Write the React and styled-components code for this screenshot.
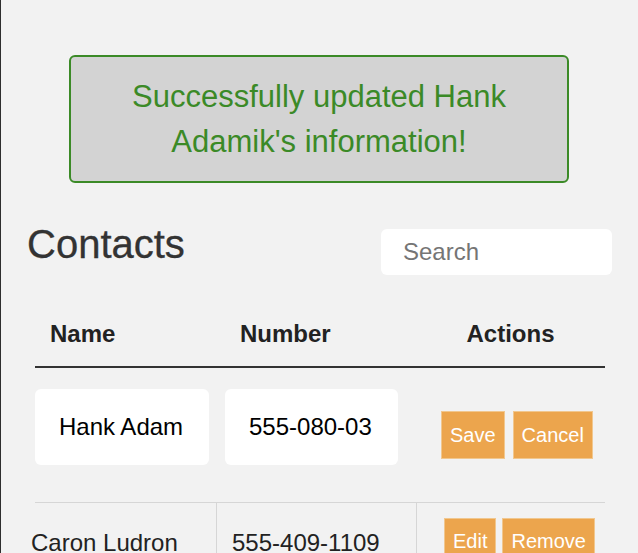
import React from "react";
import styled, { createGlobalStyle } from "styled-components";

const GlobalStyle = createGlobalStyle`
  html, body { margin: 0; padding: 0; background: #f2f2f2; }
  body { font-family: "Liberation Sans", Arial, Helvetica, sans-serif; }
  * { box-sizing: border-box; }
`;

const Page = styled.div`
  min-height: 100vh;
  border-left: 1px solid #2e2e2e;
  padding: 55px 26px 0 25px;
`;

const Alert = styled.div`
  width: 500px;
  margin: 0 auto;
  border: 2px solid #3b8a27;
  border-radius: 6px;
  background: #d3d3d3;
  color: #3b8a27;
  font-size: 31px;
  line-height: 45px;
  text-align: center;
  padding: 17px 24px;
`;

const TopBar = styled.div`
  display: flex;
  justify-content: space-between;
  align-items: flex-start;
  margin-top: 38px;
`;

const Title = styled.h1`
  margin: 0 0 0 1px;
  font-size: 40px;
  line-height: 46px;
  font-weight: normal;
  color: #333;
  -webkit-text-stroke: 0.3px #333;
`;

const Search = styled.input`
  margin-top: 8px;
  width: 231px;
  height: 46px;
  border: none;
  border-radius: 6px;
  background: #fff;
  padding: 0 22px;
  font-family: inherit;
  font-size: 24px;
  color: #222;
  outline: none;
  &::placeholder { color: #757575; }
`;

const Table = styled.div`
  width: 570px;
  margin: 44px 0 0 9px;
`;

const cols = "181px 200px 189px";

const HeadRow = styled.div`
  display: grid;
  grid-template-columns: ${cols};
  padding-top: 1px;
  padding-bottom: 18px;
  border-bottom: 2px solid #333;
`;

const HeadCell = styled.div`
  font-size: 24px;
  line-height: 28px;
  font-weight: bold;
  color: #222;
  padding-left: ${(p) => p.$pad || 0}px;
  text-align: ${(p) => p.$align || "left"};
`;

const Row = styled.div`
  display: grid;
  grid-template-columns: ${cols};
  align-items: stretch;
  min-height: ${(p) => p.$h}px;
  border-top: ${(p) => (p.$line ? "1px solid #d6d6d6" : "none")};
`;

const Cell = styled.div`
  display: flex;
  align-items: center;
  padding-left: ${(p) => p.$pad || 0}px;
  padding-top: ${(p) => p.$top || 0}px;
  border-left: ${(p) => (p.$divider ? "1px solid #d6d6d6" : "none")};
  font-size: 24px;
  color: #222;
`;

const CellText = styled.span`
  margin-left: ${(p) => p.$shift || 0}px;
`;

const Field = styled.input`
  width: ${(p) => p.$w}px;
  height: 76px;
  margin-bottom: 16px;
  border: none;
  border-radius: 6px;
  background: #fff;
  padding: 0 24px;
  font-family: inherit;
  font-size: 24px;
  color: #000;
  outline: none;
`;

const Buttons = styled.div`
  display: flex;
  gap: ${(p) => p.$gap}px;
`;

const Button = styled.button`
  height: 48px;
  padding: 0 8px;
  border: 1px solid #f1c78e;
  background: #eca54d;
  color: #fff;
  font-family: inherit;
  font-size: 20px;
  cursor: pointer;
`;

export default function App() {
  return (
    <>
      <GlobalStyle />
      <Page>
        <Alert>Successfully updated Hank Adamik's information!</Alert>
        <TopBar>
          <Title>Contacts</Title>
          <Search placeholder="Search" />
        </TopBar>
        <Table>
          <HeadRow>
            <HeadCell $pad={15}>Name</HeadCell>
            <HeadCell $pad={24}>Number</HeadCell>
            <HeadCell $align="center">Actions</HeadCell>
          </HeadRow>
          <Row $h={134}>
            <Cell>
              <Field $w={174} defaultValue="Hank Adam" />
            </Cell>
            <Cell $pad={9}>
              <Field $w={173} defaultValue="555-080-03" />
            </Cell>
            <Cell $pad={25}>
              <Buttons $gap={8}>
                <Button>Save</Button>
                <Button>Cancel</Button>
              </Buttons>
            </Cell>
          </Row>
          <Row $h={78} $line>
            <Cell $top={3}>
              <CellText $shift={-4}>Caron Ludron</CellText>
            </Cell>
            <Cell $divider $pad={15} $top={3}>
              <CellText>555-409-1109</CellText>
            </Cell>
            <Cell $divider $pad={27}>
              <Buttons $gap={6}>
                <Button>Edit</Button>
                <Button>Remove</Button>
              </Buttons>
            </Cell>
          </Row>
        </Table>
      </Page>
    </>
  );
}
